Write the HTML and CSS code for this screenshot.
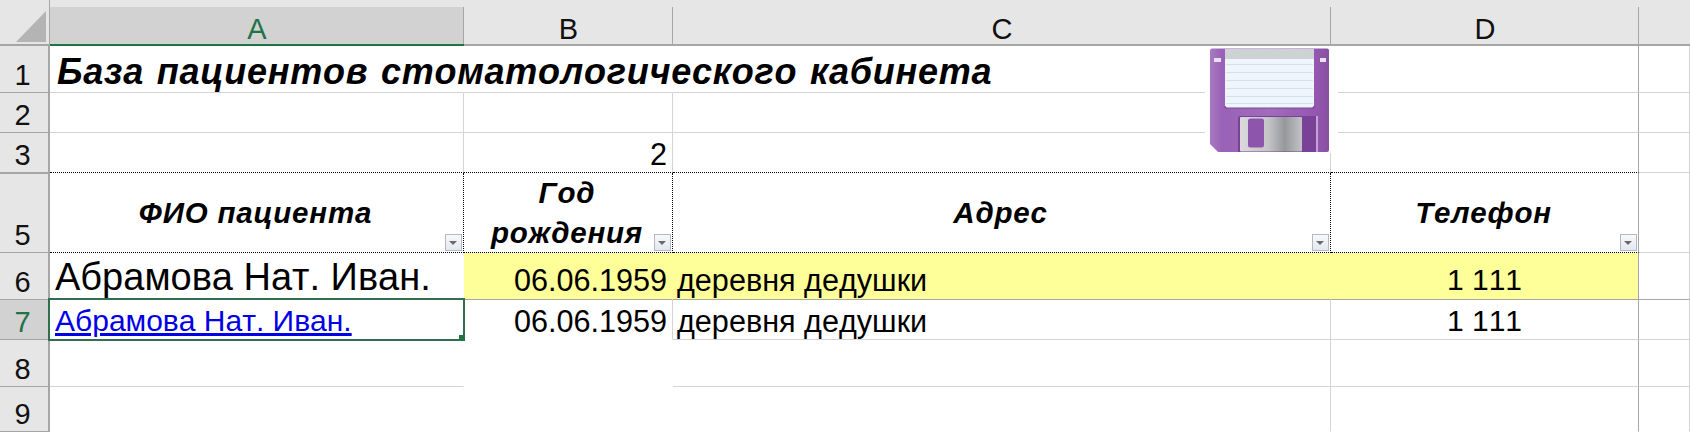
FILE: index.html
```html
<!DOCTYPE html>
<html lang="ru">
<head>
<meta charset="utf-8">
<title>База пациентов</title>
<link rel="stylesheet" href="styles.css">
</head>
<body>
<div class="sheet">
  <div class="corner"><span class="corner-tri"></span></div>
  <div class="colh active">A</div>
  <div class="colh">B</div>
  <div class="colh">C</div>
  <div class="colh">D</div>
  <div class="colh end"></div>

  <div class="rowh">1</div>
  <div class="cell nr title">База пациентов стоматологического кабинета</div>
  <div class="cell nr"></div>
  <div class="cell nr"></div>
  <div class="cell edge"></div>
  <div class="cell"></div>

  <div class="rowh">2</div>
  <div class="cell"></div>
  <div class="cell"></div>
  <div class="cell"></div>
  <div class="cell edge"></div>
  <div class="cell"></div>

  <div class="rowh r3">3</div>
  <div class="cell dotb"></div>
  <div class="cell num dotb">2</div>
  <div class="cell dotb"></div>
  <div class="cell edge dotb"></div>
  <div class="cell"></div>

  <div class="rowh r5">5</div>
  <div class="cell head dotr dotb">ФИО пациента<span class="filter"></span></div>
  <div class="cell head dotr dotb"><span>Год<br>рождения</span><span class="filter"></span></div>
  <div class="cell head dotr dotb">Адрес<span class="filter"></span></div>
  <div class="cell head edge dotb">Телефон<span class="filter"></span></div>
  <div class="cell"></div>

  <div class="rowh">6</div>
  <div class="cell big nr">Абрамова Нат. Иван.</div>
  <div class="cell hl num nr">06.06.1959</div>
  <div class="cell hl text nr">деревня дедушки</div>
  <div class="cell hl center edge">1 111</div>
  <div class="cell darkb"></div>

  <div class="rowh active">7</div>
  <div class="cell selected"><a class="link" href="#">Абрамова Нат. Иван.</a><span class="handle"></span></div>
  <div class="cell num nb">06.06.1959</div>
  <div class="cell text">деревня дедушки</div>
  <div class="cell center edge">1 111</div>
  <div class="cell"></div>

  <div class="rowh">8</div>
  <div class="cell nr"></div>
  <div class="cell nr nb"></div>
  <div class="cell"></div>
  <div class="cell edge"></div>
  <div class="cell"></div>

  <div class="rowh">9</div>
  <div class="cell nr nb"></div>
  <div class="cell nr nb"></div>
  <div class="cell nb"></div>
  <div class="cell edge nb"></div>
  <div class="cell nb"></div>

  <svg class="floppy" viewBox="1205 46 133 107" width="133" height="107" aria-hidden="true">
    <defs>
      <linearGradient id="body" x1="0" y1="0" x2="1" y2="0">
        <stop offset="0" stop-color="#a87ac2"/>
        <stop offset="0.1" stop-color="#9a62b6"/>
        <stop offset="0.5" stop-color="#a06cbc"/>
        <stop offset="0.9" stop-color="#9456b0"/>
        <stop offset="1" stop-color="#86509f"/>
      </linearGradient>
      <linearGradient id="metal" x1="0" y1="0" x2="1" y2="0">
        <stop offset="0" stop-color="#dadadc"/>
        <stop offset="0.45" stop-color="#c6c6c8"/>
        <stop offset="0.72" stop-color="#96989c"/>
        <stop offset="1" stop-color="#c2c3c6"/>
      </linearGradient>
      <filter id="soft"><feGaussianBlur stdDeviation="0.45"/></filter>
    </defs>
    <rect x="1205" y="46" width="133" height="107" fill="#fff"/>
    <g filter="url(#soft)">
      <path d="M1212 48.500H1327a2 2 0 0 1 2 2V150a2 2 0 0 1-2 2H1218l-8-8V50.500a2 2 0 0 1 2-2z" fill="url(#body)"/>
      <path d="M1225 49H1314V106a2 2 0 0 1-2 2H1227a2 2 0 0 1-2-2z" fill="#eef5fb"/>
      <rect x="1225" y="49" width="89" height="10" fill="#cdd2d4"/>
      <path d="M1226 64.500H1313M1226 72.500H1313M1226 80.500H1313M1226 88.500H1313M1226 96.500H1313M1226 103.500H1313" stroke="#d3e0ee" stroke-width="1"/>
      <path d="M1225 106a2 2 0 0 0 2 2H1312a2 2 0 0 0 2-2" fill="none" stroke="#7a4a94" stroke-width="1.200"/>
      <rect x="1214" y="58" width="7" height="4" fill="#e8e2ee"/>
      <rect x="1320" y="58" width="6" height="4" fill="#e8e2ee"/>
      <path d="M1240 116H1316V152H1238V118a2 2 0 0 1 2-2z" fill="#7a4296"/>
      <rect x="1316" y="116" width="2" height="36" fill="#c4a4d6"/>
      <rect x="1240" y="117" width="62" height="34.500" rx="1" fill="url(#metal)"/>
      <rect x="1248" y="118.500" width="16" height="29" rx="2.500" fill="#8d55ab"/>
    </g>
  </svg>
</div>
</body>
</html>
```

FILE: styles.css
```css
html, body {
  margin: 0;
  padding: 0;
  background: #fff;
}

.sheet {
  position: relative;
  display: grid;
  grid-template-columns: 50px 414px 209px 658px 308px 51px;
  grid-template-rows: 46px 47px 40px 40px 80px 47px 40px 47px 45px;
  width: 1690px;
  height: 432px;
  overflow: hidden;
  font-family: "Liberation Sans", Arial, sans-serif;
  font-kerning: none;
  color: #000;
}

.corner {
  background: #e6e6e6;
  border-right: 1px solid #a6a6a6;
  border-bottom: 2px solid #a6a6a6;
  box-sizing: border-box;
  display: flex;
  align-items: flex-end;
  justify-content: flex-end;
  padding: 0 3px 2px 0;
}

.corner-tri {
  width: 30px;
  height: 31px;
  background: #b4b4b4;
  clip-path: polygon(100% 0, 100% 100%, 0 100%);
}

.colh {
  position: relative;
  box-sizing: border-box;
  background: #e6e6e6;
  border-bottom: 2px solid #a6a6a6;
  font-size: 29px;
  line-height: 1;
  display: flex;
  align-items: flex-end;
  justify-content: center;
  color: #111;
}

.colh::after {
  content: "";
  position: absolute;
  right: 0;
  top: 7px;
  bottom: 0;
  width: 1px;
  background: #a6a6a6;
}

.colh.end::after {
  display: none;
}

.colh.active {
  background: linear-gradient(#e6e6e6 7px, #d2d2d2 7px);
  border-bottom-color: #217346;
  color: #217346;
}

.rowh {
  box-sizing: border-box;
  background: #e6e6e6;
  border-right: 2px solid #a6a6a6;
  border-bottom: 1px solid #a6a6a6;
  font-size: 29px;
  line-height: 1;
  display: flex;
  align-items: flex-end;
  justify-content: center;
  padding: 0 3px 2px 0;
  color: #111;
}

.rowh.r5 {
  border-top: 1px solid #a6a6a6;
}

.rowh.active {
  background: #d2d2d2;
  color: #217346;
}

.cell {
  position: relative;
  box-sizing: border-box;
  border-right: 1px solid #d4d4d4;
  border-bottom: 1px solid #d4d4d4;
  display: flex;
  align-items: flex-end;
  white-space: nowrap;
  font-size: 30.6px;
  line-height: 36px;
  padding: 0 5px;
}

.nr { border-right-color: transparent; }
.nb { border-bottom-color: transparent; }
.edge { border-right-color: #a6a6a6; }
.darkb { border-bottom-color: #a6a6a6; }
.dotr { border-right: 1px dotted #000; }
.dotb { border-bottom: 1px dotted #000; }

.title {
  font-size: 36px;
  font-weight: bold;
  font-style: italic;
  line-height: 40px;
  padding-left: 7px;
  z-index: 1;
  letter-spacing: 0.75px;
  word-spacing: 2px;
}

.head {
  align-items: center;
  justify-content: center;
  text-align: center;
  font-weight: bold;
  font-style: italic;
  font-size: 29.5px;
  line-height: 40px;
  letter-spacing: 0.8px;
  padding: 0 2px 0 0;
}

.filter {
  position: absolute;
  right: 1px;
  bottom: 1px;
  width: 15px;
  height: 15px;
  border: 1px solid #b4b8c4;
  background: linear-gradient(#f8f9fc, #e4e7f0);
}

.filter::after {
  content: "";
  position: absolute;
  left: 3px;
  top: 6px;
  border-left: 4px solid transparent;
  border-right: 4px solid transparent;
  border-top: 4px solid #6a6a6a;
}

.big {
  font-size: 38px;
  line-height: 44px;
}

.num {
  justify-content: flex-end;
}

.center {
  justify-content: center;
  font-size: 30px;
}

.text {
  padding-left: 4px;
}

.hl {
  background: #ffff99;
  border-bottom-color: #a6a6a6;
  padding-bottom: 1px;
}

.link {
  color: #0000e6;
  text-decoration: underline;
  font-size: 30px;
}

.selected {
  z-index: 2;
}

.selected::after {
  content: "";
  position: absolute;
  inset: -2px -2px -2px -2px;
  border: 2px solid #2f6f4f;
  pointer-events: none;
}

.handle {
  position: absolute;
  right: -2px;
  bottom: -2px;
  z-index: 1;
  width: 6px;
  height: 6px;
  background: #217346;
}

.floppy {
  position: absolute;
  left: 1205px;
  top: 46px;
  z-index: 3;
}
```
